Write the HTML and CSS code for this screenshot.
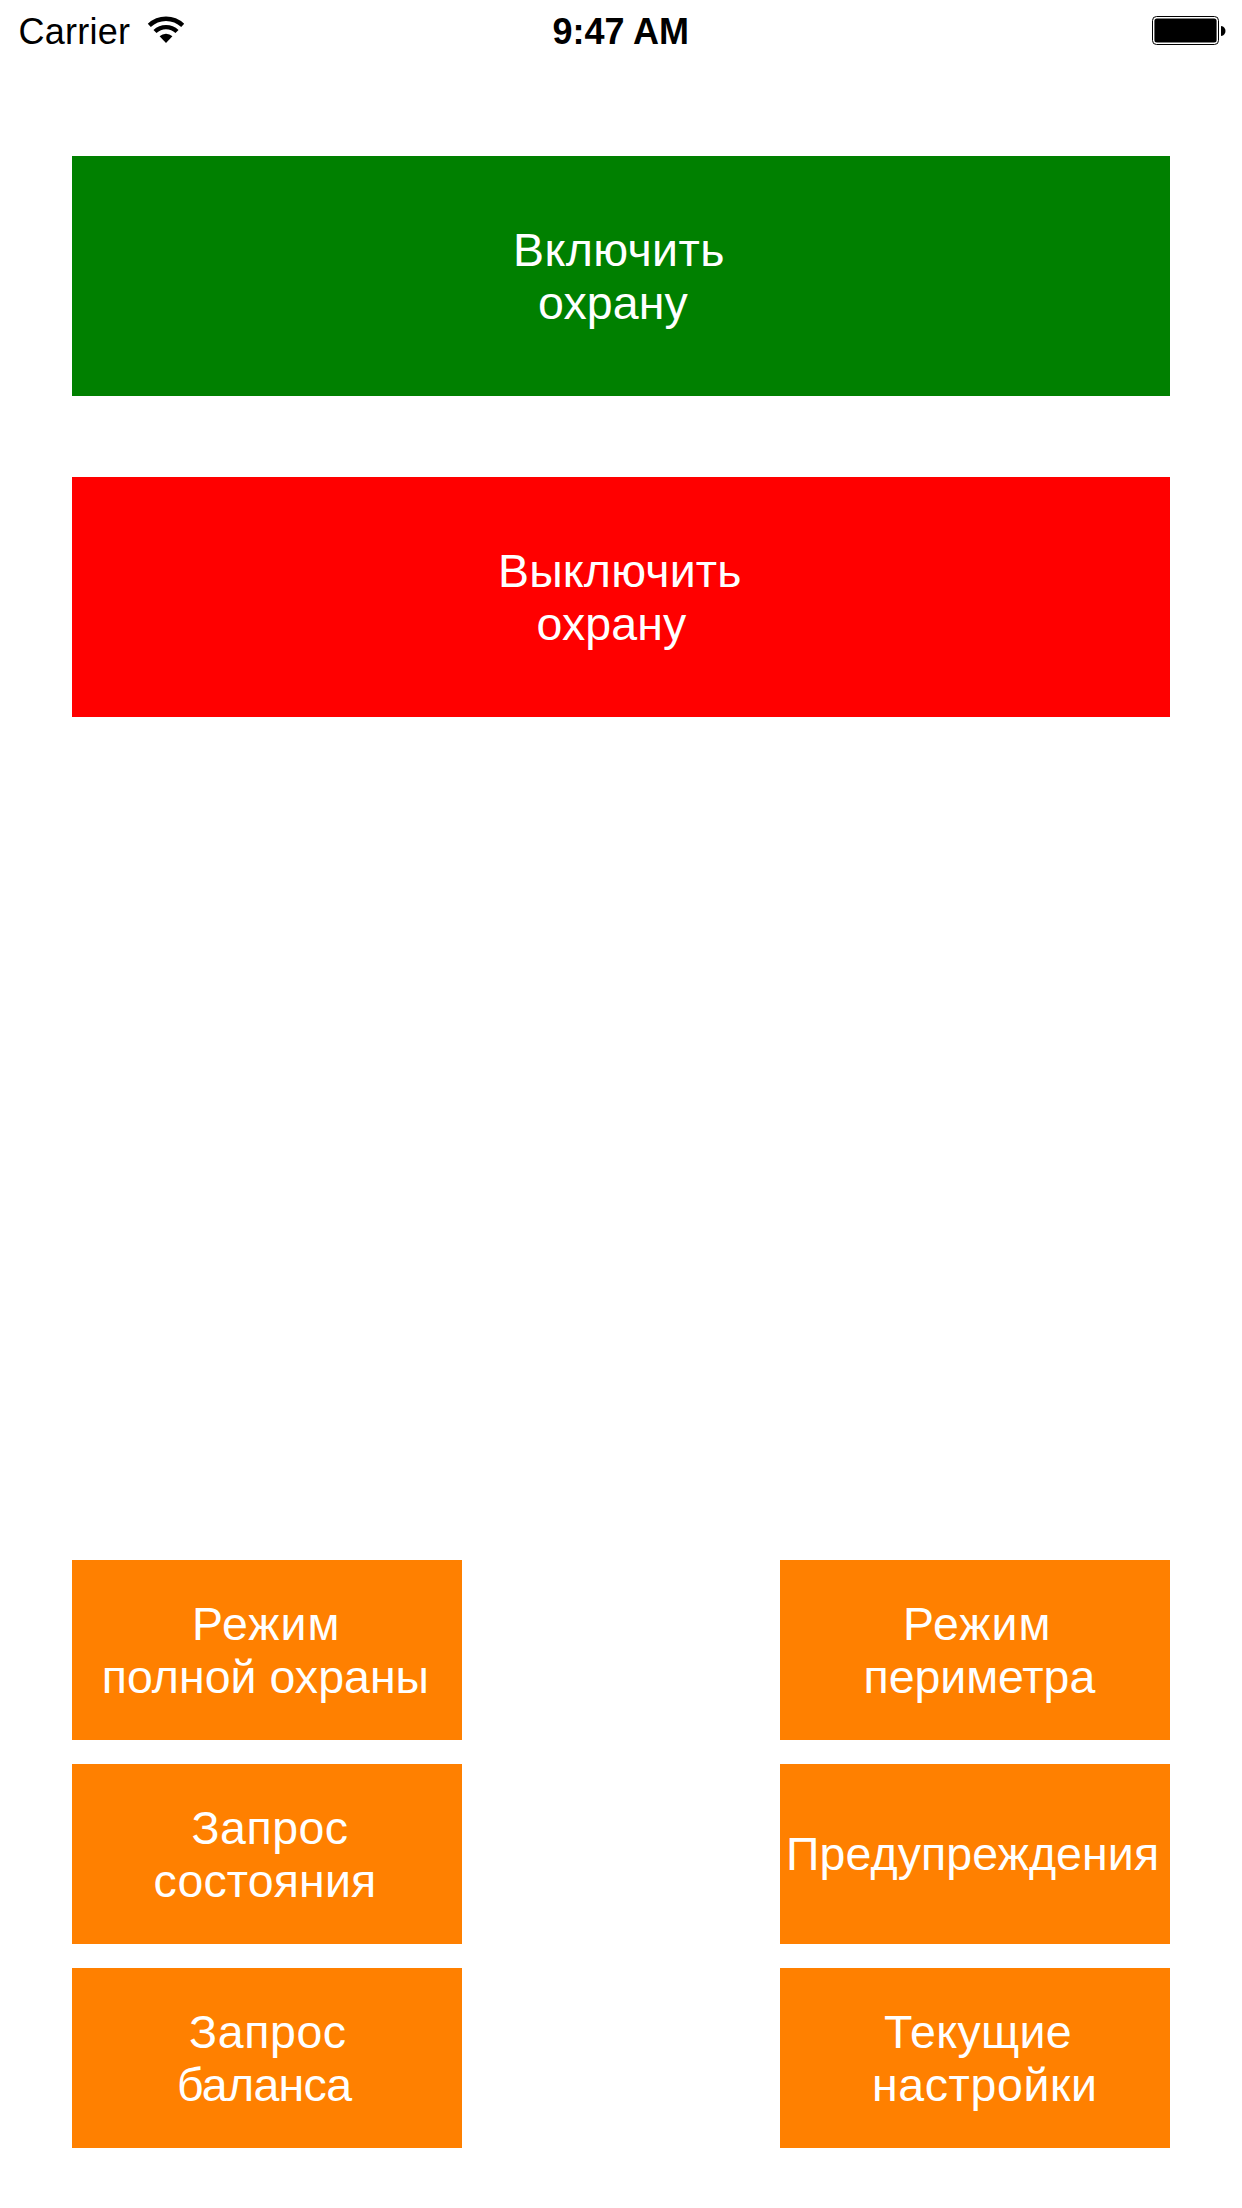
FILE: index.html
```
<!DOCTYPE html>
<html lang="ru">
<head>
  <meta charset="utf-8">
  <title>Охрана</title>
  <link rel="stylesheet" href="styles.css">
</head>
<body>
  <header class="status">
    <div class="status-side">
      <span class="carrier">Carrier</span>
      <svg class="wifi" width="38" height="28" viewBox="0 0 38 28" aria-hidden="true">
        <path class="wave" d="M2.3 10.3A24.4 24.4 0 0 1 35.7 10.3M8 16.5A15.9 15.9 0 0 1 30 16.5"/>
        <path d="M19 28L12.6 21.3A9.3 9.3 0 0 1 25.4 21.3Z"/>
      </svg>
    </div>
    <span class="clock">9:47 AM</span>
    <div class="status-side status-end">
      <svg class="battery" width="73" height="29" viewBox="0 0 73 29" aria-hidden="true">
        <rect class="shell" x="0.5" y="0.5" width="66" height="28" rx="4"/>
        <rect x="2.4" y="2.4" width="62.2" height="24.2" rx="2.5"/>
        <path d="M69 10C72 10.3 73.5 12.5 73.5 15C73.5 17.5 72 19.7 69 20Z"/>
      </svg>
    </div>
  </header>

  <main class="panel">
    <div class="primary">
      <button class="btn btn-on"><span class="line on-1">Включить</span><span class="line on-2">охрану</span></button>
      <button class="btn btn-off"><span class="line off-1">Выключить</span><span class="line off-2">охрану</span></button>
    </div>
    <div class="modes">
      <button class="btn btn-mode"><span class="line full-1">Режим</span><span class="line full-2">полной охраны</span></button>
      <button class="btn btn-mode"><span class="line perimeter-1">Режим</span><span class="line perimeter-2">периметра</span></button>
      <button class="btn btn-mode"><span class="line state-1">Запрос</span><span class="line state-2">состояния</span></button>
      <button class="btn btn-mode btn-single"><span class="line warnings">Предупреждения</span></button>
      <button class="btn btn-mode"><span class="line balance-1">Запрос</span><span class="line balance-2">баланса</span></button>
      <button class="btn btn-mode"><span class="line settings-1">Текущие</span><span class="line settings-2">настройки</span></button>
    </div>
  </main>
</body>
</html>
```
FILE: styles.css
```
* {
  box-sizing: border-box;
}

body {
  margin: 0;
  height: 2208px;
  display: flex;
  flex-direction: column;
  background: #fff;
  color: #000;
  font-family: "Liberation Sans", Arial, sans-serif;
}

/* Status bar */
.status {
  height: 60px;
  padding: 0 17px 0 18.5px;
  display: flex;
  align-items: flex-start;
  font-size: 36px;
  line-height: 40px;
}

.status-side {
  flex: 1;
  display: flex;
  align-items: flex-start;
}

.status-end {
  justify-content: flex-end;
}

.carrier {
  margin-top: 12px;
  letter-spacing: 0.25px;
}

.clock {
  margin: 12px 2px 0 0;
  font-weight: bold;
}

.wifi {
  margin: 15px 0 0 16.7px;
}

.wave {
  fill: none;
  stroke: #000;
  stroke-width: 4.4;
}

.battery {
  margin-top: 16px;
  overflow: visible;
}

.shell {
  fill: none;
  stroke: #000;
  stroke-width: 1;
}

/* Buttons */
.panel {
  flex: 1;
  padding: 96px 72px 60px;
  display: flex;
  flex-direction: column;
  justify-content: space-between;
}

.primary {
  display: flex;
  flex-direction: column;
  gap: 81px;
}

.modes {
  display: grid;
  grid-template-columns: 390px 390px;
  justify-content: space-between;
  gap: 24px 0;
}

.btn {
  height: 240px;
  margin: 0;
  padding: 2px 0 0;
  border: 0;
  display: flex;
  flex-direction: column;
  justify-content: center;
  align-items: flex-start;
  color: #fff;
  font: 46.5px/53px "Liberation Sans", Arial, sans-serif;
}

.btn-on {
  background: #008000;
}

.btn-off {
  background: #f00;
}

.btn-mode {
  height: 180px;
  background: #ff8000;
}

.btn-single {
  padding-top: 0;
}

.line {
  white-space: nowrap;
}

/* Optical placement of each label line */
.on-1 { margin-left: 441px; letter-spacing: 0.4px; }
.on-2 { margin-left: 466px; letter-spacing: 0.1px; }
.off-1 { margin-left: 426px; letter-spacing: 0.19px; }
.off-2 { margin-left: 464.5px; letter-spacing: 0.1px; }
.full-1 { margin-left: 120px; letter-spacing: 1px; }
.full-2 { margin-left: 29.7px; letter-spacing: 0.03px; }
.perimeter-1 { margin-left: 123px; letter-spacing: 1px; }
.perimeter-2 { margin-left: 83.5px; letter-spacing: -0.05px; }
.state-1 { margin-left: 119.5px; letter-spacing: 0.5px; }
.state-2 { margin-left: 81.5px; letter-spacing: 0.15px; }
.warnings { margin-left: 6px; letter-spacing: 0.1px; }
.balance-1 { margin-left: 117px; letter-spacing: 0.6px; }
.balance-2 { margin-left: 105px; letter-spacing: -0.7px; }
.settings-1 { margin-left: 104px; letter-spacing: 0.3px; }
.settings-2 { margin-left: 92px; letter-spacing: 0.6px; }
```
